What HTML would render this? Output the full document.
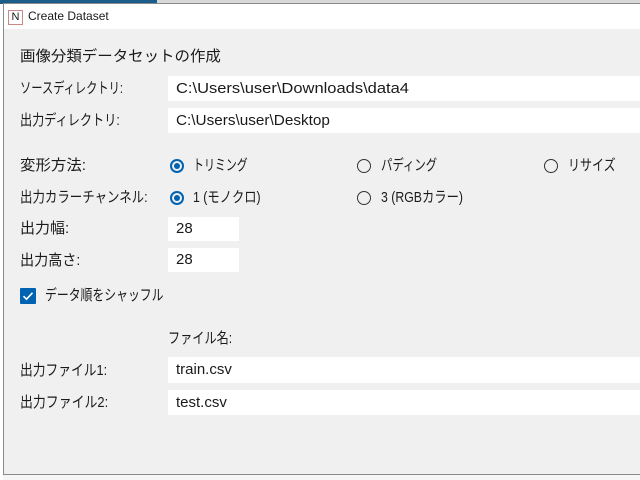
<!DOCTYPE html>
<html><head><meta charset="utf-8"><style>
*{margin:0;padding:0;box-sizing:border-box}
body{width:640px;height:480px;overflow:hidden;position:relative;background:#f6f6f6;font-family:"Segoe UI","Liberation Sans","Noto Sans CJK JP",sans-serif;font-size:15px;color:#1a1a1a}
.abs{position:absolute;white-space:nowrap}
.win{position:absolute;left:3px;top:3px;width:640px;height:472px;border:1px solid #8a8a8a;background:#f0f0f0}
.title{position:absolute;left:0;top:0;right:0;height:25px;background:#fff}
.field{position:absolute;background:#fff;line-height:25px}
.lbl{position:absolute;white-space:nowrap;line-height:20px;transform-origin:0 50%}
.field span{position:absolute;left:8px;top:0;white-space:nowrap;transform-origin:0 50%}
.radio{position:absolute;width:14px;height:14px;border-radius:50%;border:1px solid #333}
.radio.on{border:2px solid #0063b1}
.radio.on::after{content:"";position:absolute;left:2px;top:2px;width:6px;height:6px;border-radius:50%;background:#0063b1}
</style></head><body>
<div class="abs" style="left:0;top:0;width:157px;height:4px;background:#1b5d8a"></div>
<div class="abs" style="left:157px;top:0;width:483px;height:3px;background:#d8d8d8"></div>
<div class="abs" style="left:0;top:4px;width:3px;height:476px;background:#fff"></div>
<div class="win">
 <div class="title">
  <div class="abs" style="left:4px;top:6px;width:15px;height:15px;border:1px solid #c88;background:#fff;font-size:11px;line-height:13px;text-align:center">N</div>
  <div class="lbl" style="left:24px;top:2px;font-size:12px">Create Dataset</div>
 </div>
</div>
<div class="lbl" style="left:20px;top:47px;transform:scaleX(1.03)">画像分類データセットの作成</div>
<div class="lbl" style="left:20px;top:79px;transform:scaleX(0.75)">ソースディレクトリ:</div>
<div class="field" style="left:168px;top:76px;width:472px;height:25px"><span style="transform:scaleX(1.10)">C:\Users\user\Downloads\data4</span></div>
<div class="lbl" style="left:20px;top:111px;transform:scaleX(0.81)">出力ディレクトリ:</div>
<div class="field" style="left:168px;top:108px;width:472px;height:25px"><span style="transform:scaleX(1.02)">C:\Users\user\Desktop</span></div>
<div class="lbl" style="left:20px;top:156px;transform:scaleX(1.03)">変形方法:</div>
<div class="radio on" style="left:170px;top:159px"></div><div class="lbl" style="left:193px;top:156px;transform:scaleX(0.73)">トリミング</div>
<div class="radio" style="left:357px;top:159px"></div><div class="lbl" style="left:381px;top:156px;transform:scaleX(0.76)">パディング</div>
<div class="radio" style="left:544px;top:159px"></div><div class="lbl" style="left:568px;top:156px;transform:scaleX(0.8)">リサイズ</div>
<div class="lbl" style="left:20px;top:188px;transform:scaleX(0.83)">出力カラーチャンネル:</div>
<div class="radio on" style="left:170px;top:191px"></div><div class="lbl" style="left:193px;top:188px;transform:scaleX(0.82)">1 (モノクロ)</div>
<div class="radio" style="left:357px;top:191px"></div><div class="lbl" style="left:381px;top:188px;transform:scaleX(0.82)">3 (RGBカラー)</div>
<div class="lbl" style="left:20px;top:219px">出力幅:</div>
<div class="field" style="left:168px;top:217px;width:71px;height:24px;line-height:24px"><span>28</span></div>
<div class="lbl" style="left:20px;top:251px;transform:scaleX(0.94)">出力高さ:</div>
<div class="field" style="left:168px;top:248px;width:71px;height:24px;line-height:24px"><span>28</span></div>
<div class="abs" style="left:20px;top:288px;width:16px;height:16px;background:#0063b1;border-radius:1px">
<svg width="16" height="16" viewBox="0 0 16 16"><path d="M3.5 8.2L6.5 11.2L12.5 4.8" stroke="#fff" stroke-width="1.6" fill="none"/></svg></div>
<div class="lbl" style="left:45px;top:286px;transform:scaleX(0.79)">データ順をシャッフル</div>
<div class="lbl" style="left:168px;top:329px;transform:scaleX(0.81)">ファイル名:</div>
<div class="lbl" style="left:20px;top:361px;transform:scaleX(0.85)">出力ファイル1:</div>
<div class="field" style="left:168px;top:357px;width:472px;height:26px;line-height:26px"><span>train.csv</span></div>
<div class="lbl" style="left:20px;top:393px;transform:scaleX(0.86)">出力ファイル2:</div>
<div class="field" style="left:168px;top:390px;width:472px;height:25px"><span>test.csv</span></div>
</body></html>
